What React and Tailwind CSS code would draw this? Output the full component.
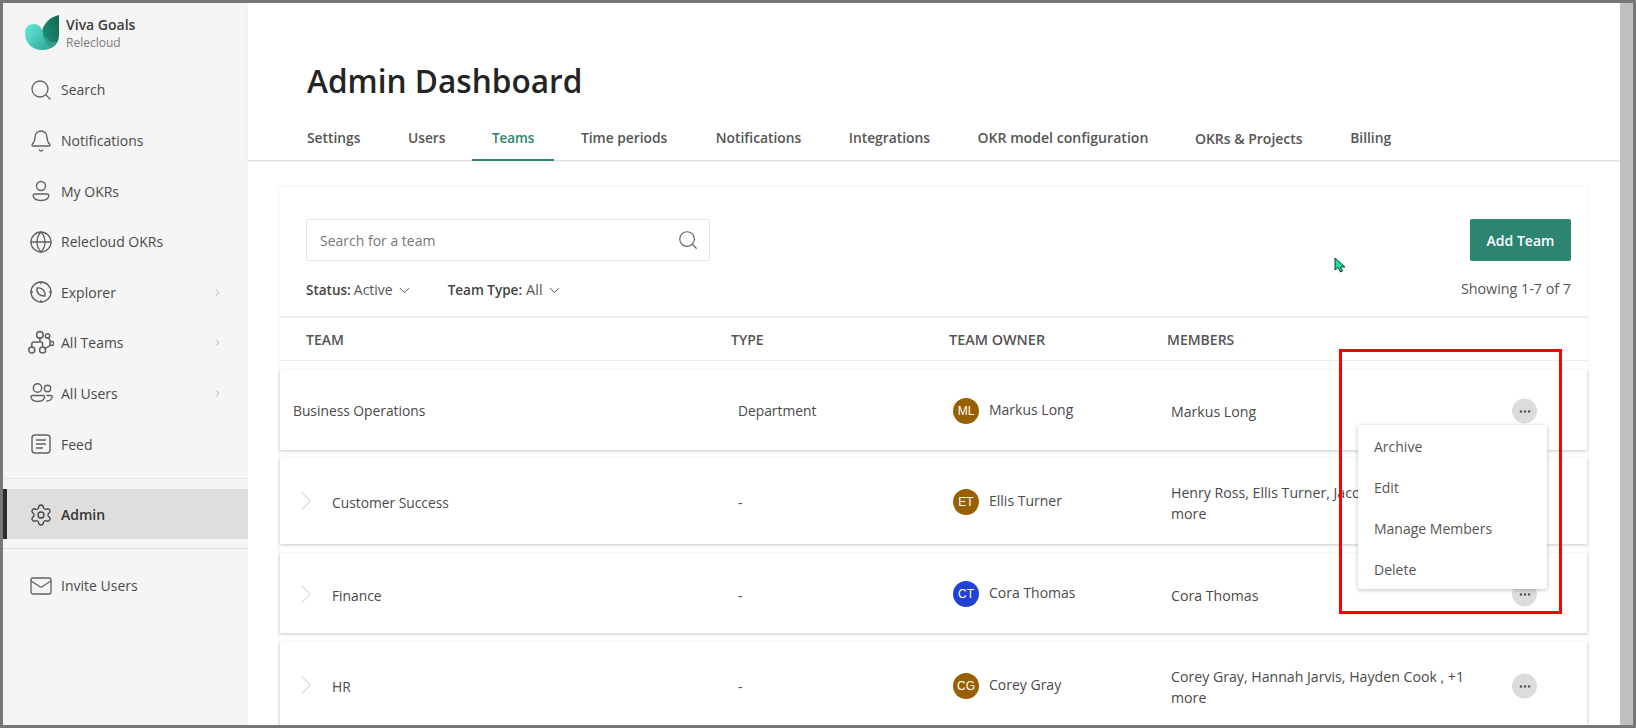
import React from "react";
import { Search, Bell, Globe, Settings, Mail, ChevronRight, ChevronDown, MoreHorizontal } from "lucide-react";

const FONT = "font-['Open_Sans','Noto_Sans',sans-serif]";

const Ic = ({ children, size = 24 }) => (
  <svg width={size} height={size} viewBox="0 0 24 24" fill="none" stroke="#616161" strokeWidth="1.4" strokeLinecap="round" strokeLinejoin="round" className="shrink-0">
    {children}
  </svg>
);

const UserIcon = () => (
  <Ic>
    <circle cx="12" cy="7" r="4.5" />
    <path d="M6 15h12c1.300 0 2 .8 1.800 1.900-.5 2.900-3.400 4.600-7.800 4.600s-7.300-1.700-7.800-4.600C4 15.800 4.700 15 6 15z" />
  </Ic>
);
const ExplorerIcon = () => (
  <Ic>
    <circle cx="12" cy="12" r="10" />
    <path d="M8 8c5-.8 8.500 2.700 8 8-5.300.5-8.800-3-8-8z" />
    <path d="M12 2v1.500M12 20.500V22M2 12h1.500M20.500 12H22" />
  </Ic>
);
const TeamsIcon = () => (
  <Ic size={26}>
    <circle cx="11" cy="4.500" r="3" />
    <circle cx="18" cy="5.500" r="2" />
    <circle cx="22" cy="12.500" r="1.800" />
    <circle cx="3.500" cy="18.500" r="2.800" />
    <circle cx="13.500" cy="18.500" r="2.800" />
    <path d="M11 7.500V11M3.500 15.700V13c0-1.200.8-2 2-2H12c1 0 1.500.8 1.500 2v2.700M19 7.300l2 3.700M15.500 17c2-1 3.500-2 5.500-3" />
  </Ic>
);
const UsersIcon = () => (
  <Ic>
    <circle cx="8.500" cy="6" r="4.200" />
    <circle cx="18.500" cy="6.500" r="3.200" />
    <path d="M3.500 13.500h10.500c1.200 0 1.800.7 1.600 1.700-.5 2.800-3 4.300-6.800 4.300s-6.300-1.500-6.800-4.300c-.2-1 .4-1.700 1.500-1.700z" />
    <path d="M18 13.500h3.800c1 0 1.500.6 1.300 1.500-.4 2.600-2.500 3.900-5.300 4" />
  </Ic>
);
const FeedIcon = () => (
  <Ic>
    <rect x="3" y="3" width="18" height="18" rx="3" />
    <path d="M7.500 8h9M7.500 12h9M7.500 16h6" />
  </Ic>
);

const Logo = () => (
  <svg width="36" height="36" viewBox="0 0 36 36">
    <defs>
      <linearGradient id="lg1" x1="0" y1="0.2" x2="1" y2="1">
        <stop offset="0" stopColor="#62e3d2" />
        <stop offset="1" stopColor="#2aa594" />
      </linearGradient>
      <linearGradient id="lg2" x1="0" y1="1" x2="1" y2="0">
        <stop offset="0" stopColor="#1f9480" />
        <stop offset="1" stopColor="#13664f" />
      </linearGradient>
    </defs>
    <path d="M35 1C26 3 20 9 18 17c1 8 4 14 9 17 5-3 8-7 8-13z" fill="url(#lg2)" />
    <path d="M1 19C1 13 5 10 10 10c5 0 8 4 9 9 1 7 4 13 8 15-3 1.500-6 2-9 2C8 36 1 29 1 19z" fill="url(#lg1)" />
    <path d="M19 19c1 7 4 13 8 15 3-1.500 5-3.500 6.500-6-6 1-12-2-14.500-9z" fill="#2f9d8a" />
  </svg>
);

const NavItem = ({ icon, label, chevron }) => (
  <div className="h-[50.6px] flex items-center pl-[26px] pr-[25px] text-[#4a4a4a] text-[14px]">
    <span className="w-6 h-6 shrink-0 flex items-center justify-center">{icon}</span>
    <span className="ml-[8px] flex-1">{label}</span>
    {chevron && <ChevronRight size={11} strokeWidth={1.5} className="text-[#9a9a9a]" />}
  </div>
);

const tabs = [
  { t: "Settings", c: "px-[21px] mr-[5.500px] text-[13.8px] border-transparent" },
  { t: "Users", c: "px-[21px] mr-[5.500px] text-[13.8px] border-transparent" },
  { t: "Teams", c: "px-[20px] mr-[5.500px] text-[13.4px] text-[#2b8571] border-[#2b8571]" },
  { t: "Time periods", c: "pl-[21px] pr-[22px] mr-[5.500px] text-[13.8px] border-transparent" },
  { t: "Notifications", c: "px-[21px] mr-[5.500px] text-[13.8px] border-transparent" },
  { t: "Integrations", c: "px-[21px] mr-[5.500px] text-[13.8px] border-transparent" },
  { t: "OKR model configuration", c: "px-[21px] mr-[4.500px] text-[14.1px] border-transparent" },
  { t: "OKRs & Projects", c: "px-[21px] mr-[5.500px] text-[14px] border-transparent" },
  { t: "Billing", c: "px-[21px] mr-[5.500px] text-[13.8px] border-transparent" },
];

const Avatar = ({ initials, color }) => (
  <span className={`w-[26px] h-[26px] rounded-full flex items-center justify-center shrink-0 text-white text-[12px] font-['Liberation_Sans',sans-serif] ${color}`}>
    {initials}
  </span>
);

const Dots = () => (
  <span className="w-[25px] h-[25px] rounded-full bg-[#dcdcdc] flex items-center justify-center text-[#555]">
    <MoreHorizontal size={14} strokeWidth={2.4} />
  </span>
);

const cols = "grid grid-cols-[422px_218px_218px_1fr]";

const Row = ({ h, mt, team, child, type, initials, color, owner, members, menu, textPad, memberPad }) => (
  <div className={`relative bg-white shadow-[0_1px_3px_rgba(0,0,0,0.22)] ${cols} items-center text-[14px] text-[#4a4a4a] ${h} ${mt}`}>
    <div className={`flex items-center text-[13.8px] ${textPad} ${child ? "pl-[9px]" : "pl-[13px]"}`}>
      {child && <ChevronRight size={34} strokeWidth={0.8} className="text-[#dedede] mr-[9px] -mt-[5px] shrink-0" />}
      <span>{team}</span>
    </div>
    <div className={`pl-[36px] text-[13.8px] ${textPad}`}>{type}</div>
    <div className="relative flex items-center pl-[33px] pt-[2px]">
      <Avatar initials={initials} color={color} />
      <span className="ml-[10px] -mt-[3px]">{owner}</span>
    </div>
    <div className={`pl-[33px] pr-[116px] leading-[21px] text-[14.15px] ${memberPad}`}>{members}</div>
    <div className="absolute right-[50px] top-1/2 -translate-y-1/2 mt-[1px]">
      <Dots />
    </div>
    {menu}
  </div>
);

const Menu = () => (
  <div className="absolute z-20 left-[1078px] top-[55px] w-[189px] h-[164px] bg-white shadow-[0_1px_4px_rgba(0,0,0,0.25)] rounded-[2px] pt-[1px] text-[14px] text-[#555]">
    {["Archive", "Edit", "Manage Members", "Delete"].map((m) => (
      <div key={m} className="h-[41px] flex items-center pl-[16px]">{m}</div>
    ))}
  </div>
);

export default function App() {
  return (
    <div className={`relative w-[1636px] h-[728px] overflow-hidden border-[3px] border-[#777777] flex bg-white ${FONT}`}>
      {/* Sidebar */}
      <aside className="w-[245px] shrink-0 bg-[#f5f5f5] flex flex-col">
        <div className="h-[61.7px] flex pl-[21px] pt-[11px]">
          <Logo />
          <div className="ml-[6px] mt-[1px]">
            <div className="text-[14px] leading-[20px] font-semibold text-[#3c3c3c]">Viva Goals</div>
            <div className="text-[12px] leading-[16px] text-[#7a7a7a]">Relecloud</div>
          </div>
        </div>
        <NavItem icon={<Search size={24} strokeWidth={1.3} color="#616161" />} label="Search" />
        <NavItem icon={<Bell size={24} strokeWidth={1.3} color="#616161" />} label="Notifications" />
        <NavItem icon={<UserIcon />} label="My OKRs" />
        <NavItem icon={<Globe size={24} strokeWidth={1.3} color="#616161" />} label="Relecloud OKRs" />
        <NavItem icon={<ExplorerIcon />} label="Explorer" chevron />
        <NavItem icon={<TeamsIcon />} label="All Teams" chevron />
        <NavItem icon={<UsersIcon />} label="All Users" chevron />
        <NavItem icon={<FeedIcon />} label="Feed" />
        <div className="mt-[9px] border-t border-[#e6e6e6]" />
        <div className="mt-[10px] h-[50px] bg-[#dedede] border-l-[4px] border-[#2b2b2b] flex items-center pl-[22px] pt-[1px] text-[14px] font-semibold text-[#333]">
          <span className="w-6 h-6 flex items-center justify-center"><Settings size={24} strokeWidth={1.3} color="#424242" /></span>
          <span className="ml-[8px]">Admin</span>
        </div>
        <div className="mt-[9px] border-t border-[#dcdcdc]" />
        <div className="mt-[11px]">
          <NavItem icon={<Mail size={24} strokeWidth={1.3} color="#616161" />} label="Invite Users" />
        </div>
      </aside>

      {/* Main */}
      <main className="flex-1 min-w-0 flex flex-col">
        <header className="h-[158px] shrink-0 border-b border-[#e0e0e0] shadow-[0_1px_2px_rgba(0,0,0,0.06)] flex flex-col pl-[59px]">
          <h1 className="mt-[56px] text-[31.6px] leading-[44px] font-semibold text-[#242424]">Admin Dashboard</h1>
          <nav className="mt-[14px] flex items-start -ml-[21px] font-semibold text-[#555]">
            {tabs.map(({ t, c }) => (
              <div key={t} className={`h-[44px] flex items-center border-b-2 ${c}`}>
                {t}
              </div>
            ))}
          </nav>
        </header>

        <div className="pl-[32px] pr-[33px] pt-[26px]">
          <section className="relative bg-white shadow-[0_0_4px_rgba(0,0,0,0.08)] rounded-[2px]">
            <div className="h-[131px] border-b-2 border-[#ececec] pl-[26px] pr-[16px] pt-[32px] flex justify-between">
              <div>
                <div className="w-[404px] h-[42px] border border-[#e6e6e6] rounded-[2px] flex items-center justify-between pl-[13px] pr-[10px] text-[14px] text-[#777]">
                  <span>Search for a team</span>
                  <Search size={22} strokeWidth={1.3} color="#666" />
                </div>
                <div className="mt-[19px] flex items-center text-[#555] leading-[20px]">
                  <span className="text-[13.500px] font-semibold text-[#444]">Status:</span>
                  <span className="text-[14px] ml-[3px]">Active</span>
                  <ChevronDown size={17} strokeWidth={1.4} className="ml-[3px]" />
                  <span className="text-[13.500px] font-semibold text-[#444] ml-[35px]">Team Type:</span>
                  <span className="text-[14.500px] ml-[4px]">All</span>
                  <ChevronDown size={17} strokeWidth={1.4} className="ml-[3px]" />
                </div>
              </div>
              <div className="flex flex-col items-end">
                <button className="w-[101px] h-[42px] rounded-[2px] bg-[#2b8571] text-white text-[14px] font-semibold">Add Team</button>
                <div className="mt-[18px] text-[14.3px] leading-[20px] text-[#555]">Showing 1-7 of 7</div>
              </div>
            </div>
            <div className={`${cols} h-[43px] pt-[1px] items-center border-b border-[#ececec] text-[14px] font-semibold text-[#555]`}>
              <div className="pl-[26px]">TEAM</div>
              <div className="pl-[29px]">TYPE</div>
              <div className="pl-[29px]"><span className="text-[14.4px]">TEAM OWNER</span></div>
              <div className="pl-[29px]">MEMBERS</div>
            </div>
            <Row h="h-[80px]" mt="mt-[9px]" textPad="pt-[3px]" memberPad="pt-[2px]" team="Business Operations" type="Department" initials="ML" color="bg-[#986000]" owner="Markus Long" members="Markus Long" menu={<Menu />} />
            <Row h="h-[86px]" mt="mt-[8px]" child textPad="pt-[5px]" memberPad="pt-[4px]" team="Customer Success" type="-" initials="ET" color="bg-[#986000]" owner="Ellis Turner" members="Henry Ross, Ellis Turner, Jacob Hancock , +3 more" />
            <Row h="h-[80px]" mt="mt-[9px]" child textPad="pt-[6px]" memberPad="pt-[5px]" team="Finance" type="-" initials="CT" color="bg-[#2142d3]" owner="Cora Thomas" members="Cora Thomas" />
            <Row h="h-[86px]" mt="mt-[9px]" child textPad="pt-[4px]" memberPad="pt-[4px]" team="HR" type="-" initials="CG" color="bg-[#986000]" owner="Corey Gray" members="Corey Gray, Hannah Jarvis, Hayden Cook , +1 more" />
          </section>
        </div>
      </main>

      {/* Scrollbar track */}
      <div className="w-[13px] shrink-0 bg-[#c0c0c0]" />

      {/* Annotation rectangle drawn over the page */}
      <div className="absolute z-30 left-[1336px] top-[346px] w-[223px] h-[265px] border-[3px] border-[#ff0000] pointer-events-none" />

      {/* Mouse pointer captured in the screenshot */}
      <svg className="absolute z-30 left-[1331px] top-[254px]" width="12" height="16" viewBox="0 0 12 16">
        <path d="M1 1v12l3-2.500L6.500 15l2-1-2.200-4H11z" fill="#1fe0a0" stroke="#0a3b2c" strokeWidth="1" />
      </svg>
    </div>
  );
}
